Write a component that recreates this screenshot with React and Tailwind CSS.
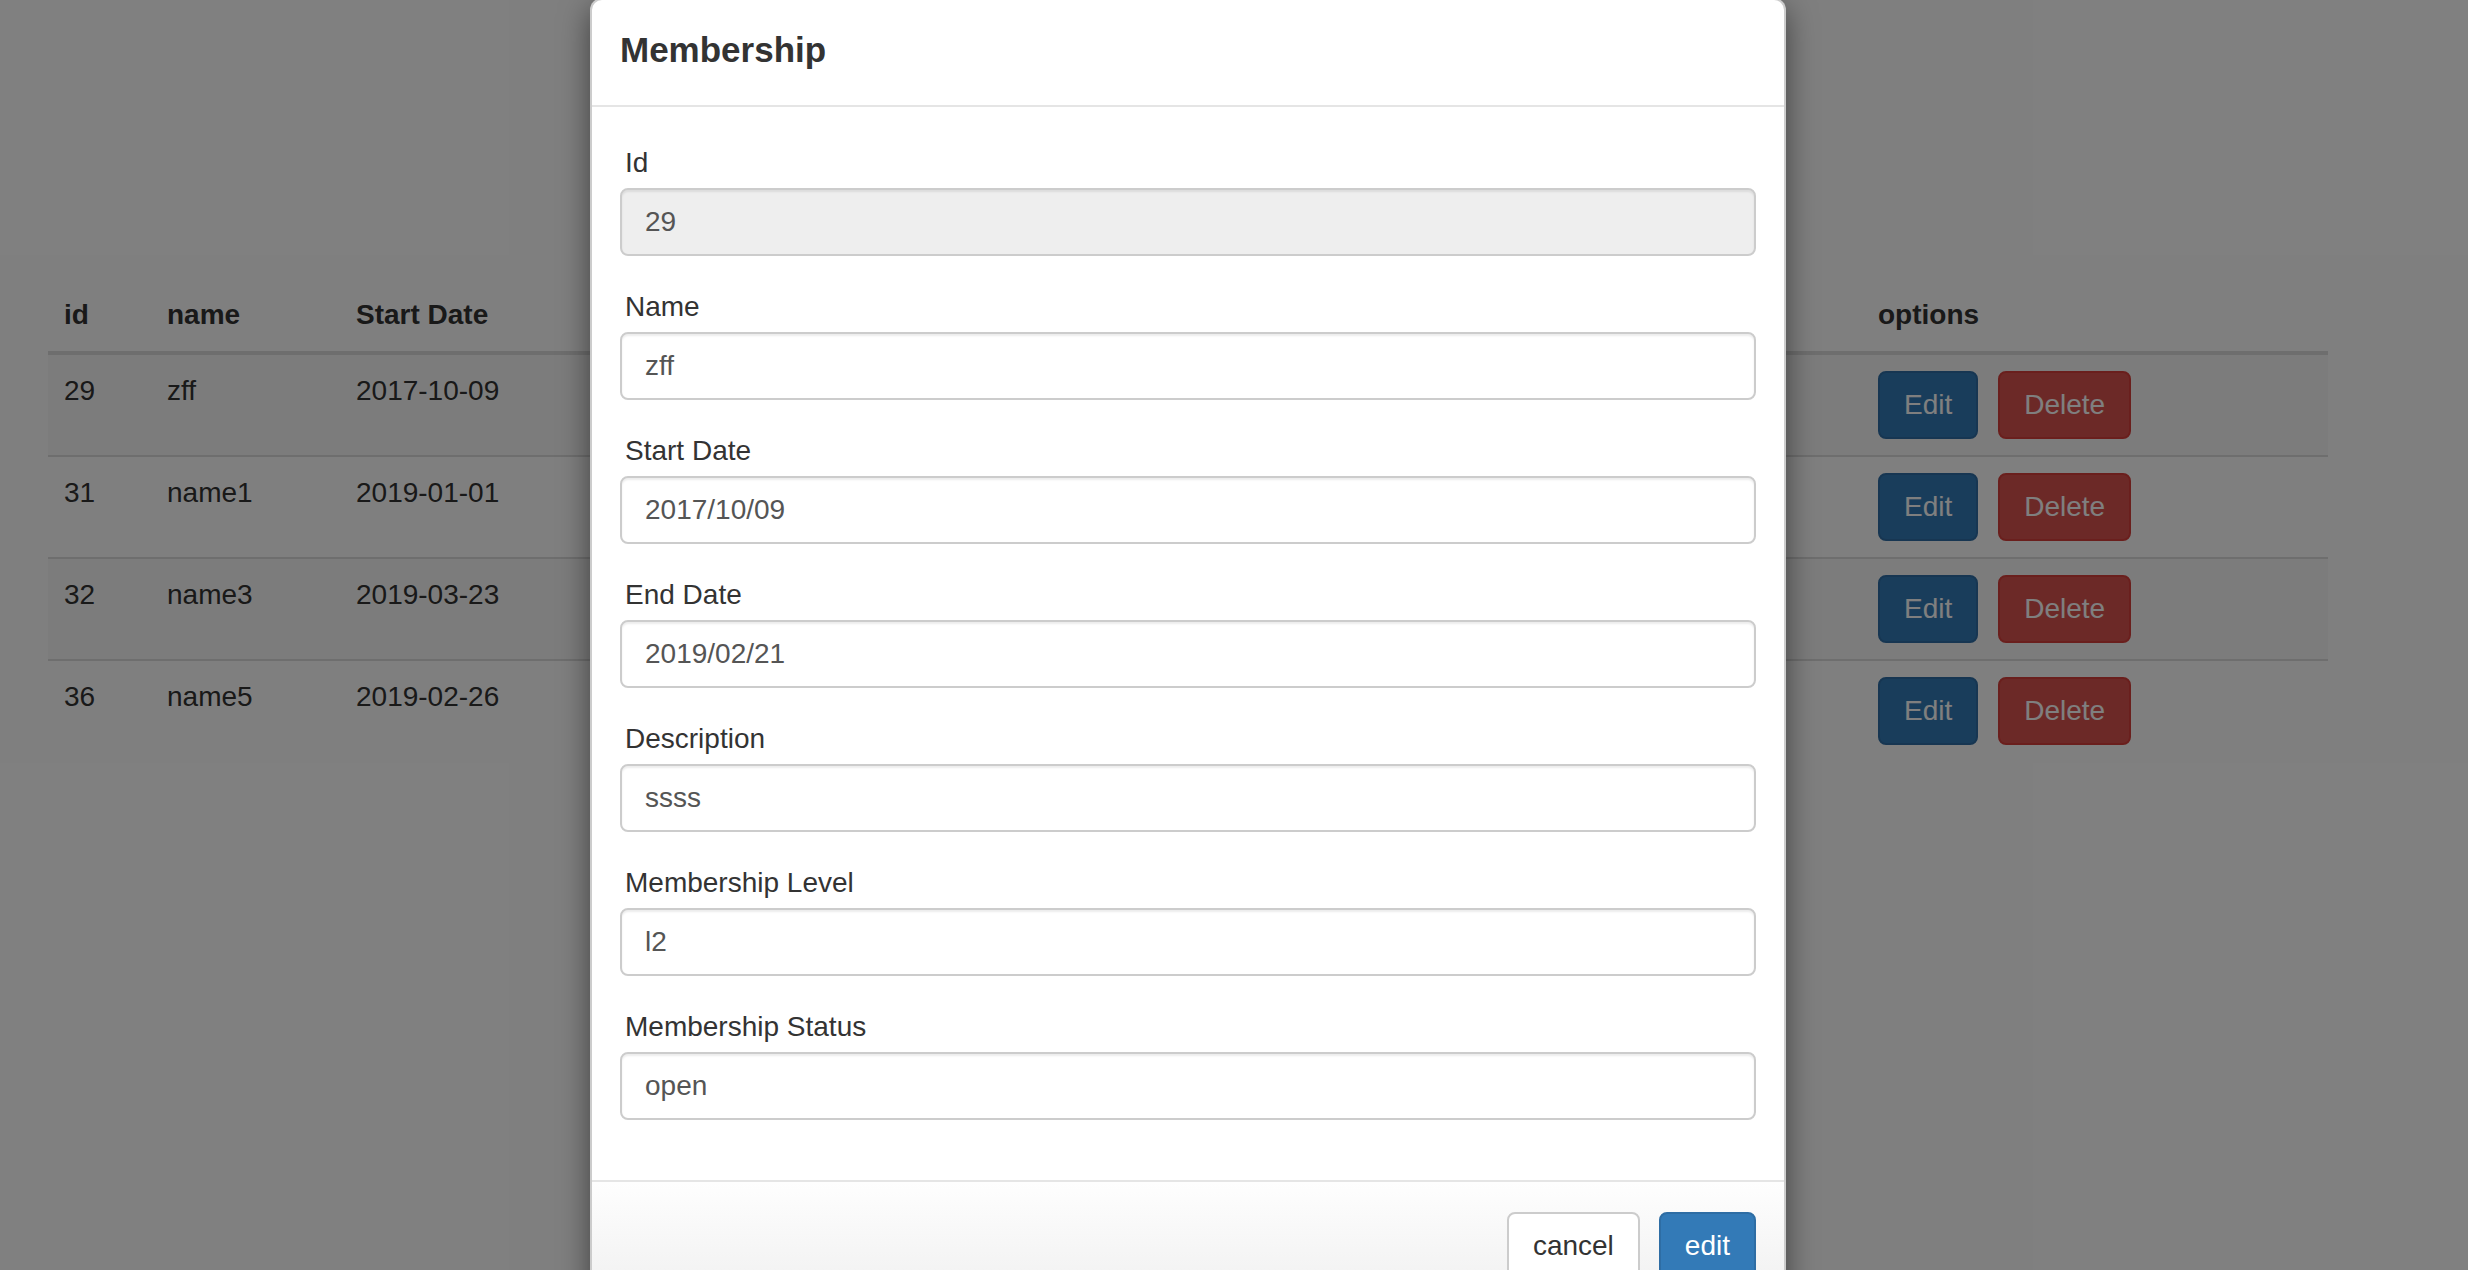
import React from "react";

const rows = [
  { id: 29, name: "zff", start: "2017-10-09" },
  { id: 31, name: "name1", start: "2019-01-01" },
  { id: 32, name: "name3", start: "2019-03-23" },
  { id: 36, name: "name5", start: "2019-02-26" },
];

const fields = [
  { label: "Id", value: "29", disabled: true },
  { label: "Name", value: "zff" },
  { label: "Start Date", value: "2017/10/09" },
  { label: "End Date", value: "2019/02/21" },
  { label: "Description", value: "ssss" },
  { label: "Membership Level", value: "l2" },
  { label: "Membership Status", value: "open" },
];

function Field({ label, value, disabled }) {
  return (
    <div className="mb-[31px]">
      <label className="block pl-[5px] mb-[5px] text-[28px] leading-[40px] text-[#333]">{label}</label>
      <input
        readOnly
        value={value}
        className={
          "block w-full h-[68px] border-2 border-[#ccc] rounded-[8px] pl-[23px] pr-[22px] text-[28px] text-[#555] outline-none shadow-[inset_0_2px_2px_rgba(0,0,0,0.075)] " +
          (disabled ? "bg-[#eeeeee]" : "bg-white")
        }
      />
    </div>
  );
}

export default function App() {
  return (
    <div className="relative h-[1270px] w-[2468px] overflow-hidden bg-white font-['Liberation_Sans',Arial,sans-serif] text-[#333]">
      <div className="pt-[279px] pl-[48px]">
        <table className="w-[2280px] border-separate border-spacing-0 text-[28px] leading-[40px] table-fixed">
          <thead>
            <tr>
              {[
                ["id", "w-[103px]"],
                ["name", "w-[189px]"],
                ["Start Date", "w-[300px]"],
                ["", "w-[300px]"],
                ["", "w-[322px]"],
                ["", "w-[300px]"],
                ["", "w-[300px]"],
                ["options", ""],
              ].map(([h, w], k) => (
                <th key={k} className={"text-left font-bold px-[16px] py-[16px] border-b-4 border-[#ddd] " + w}>
                  {h}
                </th>
              ))}
            </tr>
          </thead>
          <tbody>
            {rows.map((r, i) => {
              const cls =
                "px-[16px] py-[16px] align-top " +
                (i === 0 ? "" : "border-t-2 border-[#ddd] ") +
                (i % 2 === 0 ? "bg-[#f9f9f9]" : "");
              return (
                <tr key={r.id}>
                  <td className={cls}>{r.id}</td>
                  <td className={cls}>{r.name}</td>
                  <td className={cls}>{r.start}</td>
                  <td className={cls}></td>
                  <td className={cls}></td>
                  <td className={cls}></td>
                  <td className={cls}></td>
                  <td className={cls}>
                    <div className="flex gap-[20px]">
                      <button className="h-[68px] px-[24px] border-2 border-[#2e6da4] bg-[#337ab7] text-white rounded-[8px] leading-[40px]">
                        Edit
                      </button>
                      <button className="h-[68px] px-[24px] border-2 border-[#d43f3a] bg-[#d9534f] text-white rounded-[8px] leading-[40px]">
                        Delete
                      </button>
                    </div>
                  </td>
                </tr>
              );
            })}
          </tbody>
        </table>
      </div>

      <div className="absolute inset-0 bg-black/50" />

      <div className="absolute left-[590px] top-[-2px] w-[1196px] bg-white border-2 border-black/20 rounded-[12px] shadow-[0_10px_30px_rgba(0,0,0,0.5)]">
        <div className="px-[28px] pt-[24px] pb-[30px] border-b-2 border-[#e5e5e5]">
          <h4 className="text-[35px] leading-[51px] font-bold text-[#333]">Membership</h4>
        </div>
        <div className="px-[28px] pt-[36px] pb-[29px]">
          {fields.map((f) => (
            <Field key={f.label} {...f} />
          ))}
        </div>
        <div className="px-[28px] pt-[30px] pb-[30px] border-t-2 border-[#e5e5e5] bg-gradient-to-b from-[#fefefe] to-[#efefef] flex justify-end gap-[19px]">
          <button className="h-[68px] px-[24px] border-2 border-[#ccc] bg-white text-[#333] rounded-[8px] text-[28px] leading-[40px]">
            cancel
          </button>
          <button className="h-[68px] px-[24px] border-2 border-[#2e6da4] bg-[#337ab7] text-white rounded-[8px] text-[28px] leading-[40px]">
            edit
          </button>
        </div>
      </div>
    </div>
  );
}
